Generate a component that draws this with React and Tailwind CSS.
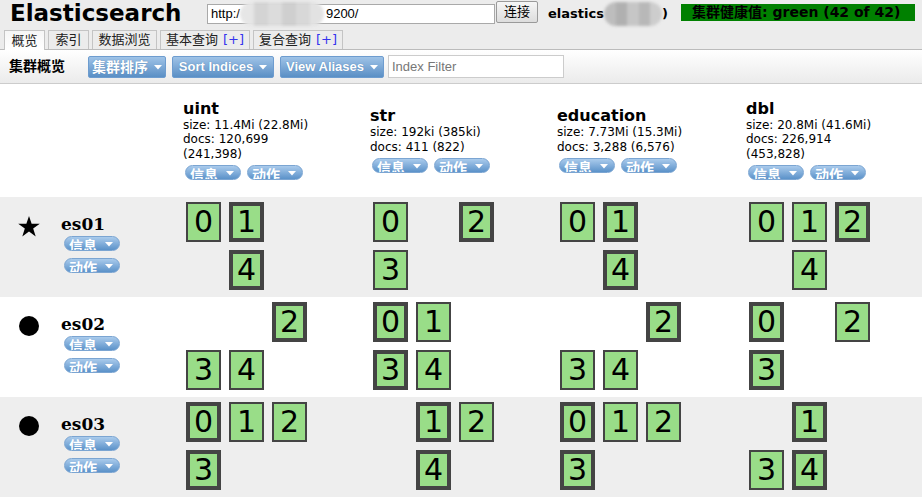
import React from 'react';

const SANS = "font-['DejaVu_Sans','Noto_Sans_CJK_SC',sans-serif]";
const CJK = "font-['DejaVu_Sans','Noto_Sans_CJK_SC',sans-serif]";

const indices = [
  { name: 'uint', size: '11.4Mi (22.8Mi)', docs: '120,699 (241,398)' },
  { name: 'str', size: '192ki (385ki)', docs: '411 (822)' },
  { name: 'education', size: '7.73Mi (15.3Mi)', docs: '3,288 (6,576)' },
  { name: 'dbl', size: '20.8Mi (41.6Mi)', docs: '226,914 (453,828)' },
];

// per node, per index: [shard number, is primary]
const nodes = [
  {
    name: 'es01',
    master: true,
    bg: 'bg-[#eeeeee]',
    shards: [
      [[0, false], [1, true], [4, true]],
      [[0, false], [2, true], [3, false]],
      [[0, false], [1, true], [4, true]],
      [[0, false], [1, false], [2, true], [4, false]],
    ],
  },
  {
    name: 'es02',
    master: false,
    bg: 'bg-white',
    shards: [
      [[2, true], [3, false], [4, false]],
      [[0, true], [1, false], [3, true], [4, false]],
      [[2, true], [3, false], [4, false]],
      [[0, true], [2, false], [3, true]],
    ],
  },
  {
    name: 'es03',
    master: false,
    bg: 'bg-[#eeeeee]',
    shards: [
      [[0, true], [1, false], [2, false], [3, true]],
      [[1, true], [2, false], [4, true]],
      [[0, true], [1, false], [2, false], [3, true]],
      [[1, true], [3, false], [4, true]],
    ],
  },
];

const colStart = ['col-start-1', 'col-start-2', 'col-start-3'];
const rowStart = ['row-start-1', 'row-start-2'];

const tabs = [
  { label: '概览', w: 'w-[41px]', active: true },
  { label: '索引', w: 'w-[41px]' },
  { label: '数据浏览', w: 'w-[65px]' },
  { label: '基本查询', w: 'w-[90px]', plus: true },
  { label: '复合查询', w: 'w-[90px]', plus: true },
];

function Caret({ className = '' }) {
  return (
    <svg width="8" height="5" viewBox="0 0 8 5" className={className}>
      <path d="M0 0 H8 L4 4.5 Z" fill="#fff" />
    </svg>
  );
}

function Pill({ label }) {
  return (
    <div className="flex h-[15px] w-[56px] items-start overflow-hidden rounded-full border border-[#7ba5d2] bg-linear-to-b from-[#aacbec] to-[#5b92c9] pl-[4px]">
      <span className={`${CJK} mt-[1px] text-[14px] font-bold leading-[16px] text-white`}>{label}</span>
      <Caret className="ml-auto mr-[6px] mt-[5px]" />
    </div>
  );
}

function ToolButton({ label, w, size = 'text-[13px]' }) {
  return (
    <div className={`flex h-[22px] ${w} items-center justify-center gap-[6px] rounded-[2px] border border-[#6d9ccf] bg-linear-to-b from-[#9fc3e7] to-[#5a8fc5] text-white`}>
      <span className={`font-['Liberation_Sans','Noto_Sans_CJK_SC',sans-serif] ${size} font-bold leading-[22px] [text-shadow:0_0_1px_#4a78a8]`}>{label}</span>
      <Caret className="mt-[1px]" />
    </div>
  );
}

function Mosaic({ w, shades }) {
  return (
    <span className={`inline-flex h-[24px] ${w} overflow-hidden rounded-[12px] blur-[1.5px]`}>
      {shades.map((c, i) => (
        <span key={i} className="h-full flex-1" style={{ background: c }} />
      ))}
    </span>
  );
}

function Shard({ n, primary }) {
  const pos = `${colStart[n % 3]} ${rowStart[n < 3 ? 0 : 1]}`;
  return (
    <div
      className={`${pos} box-border flex h-[40px] w-[35px] items-center justify-center bg-[#99dd88] border-[#444444] ${
        primary ? 'border-[4px]' : 'border-[2px]'
      } font-['DejaVu_Sans',sans-serif] text-[30px] leading-none text-black`}
    >
      {n}
    </div>
  );
}

function Star() {
  return (
    <svg width="22" height="21" viewBox="0 0 20 19">
      <polygon points="10,0 12.4,6.9 19.8,6.9 13.8,11.3 16.1,18.6 10,14.1 3.9,18.6 6.2,11.3 0.2,6.9 7.6,6.9" fill="#000" />
    </svg>
  );
}

export default function App() {
  return (
    <div className={`h-[500px] w-[922px] overflow-hidden bg-white ${SANS} text-black`}>
      {/* top bar */}
      <div className="h-[49px] bg-[#ececec]">
        <div className="flex h-[30px] items-start">
          <div className="w-[207px] pl-[10px] text-[23px] font-bold leading-[27px]">Elasticsearch</div>
          <div className="mt-[4px] flex h-[20px] w-[288px] items-center border border-[#a9a9a9] bg-white pl-[3px] font-['Liberation_Sans',sans-serif] text-[13px]">
            <span>http:/</span>
            <Mosaic w="w-[84px]" shades={['#e6e6e6', '#d4d4d4', '#dcdcdc', '#cfcfcf', '#d8d8d8', '#e2e2e2']} />
            <span className="ml-[2px]">9200/</span>
          </div>
          <div className={`ml-[1px] mt-[1px] flex h-[22px] w-[42px] items-center justify-center rounded-[2px] border border-[#9a9a9a] bg-linear-to-b from-[#f6f6f6] to-[#dddddd] ${CJK} text-[13px]`}>
            连接
          </div>
          <div className="ml-[10px] mt-[2px] flex items-center text-[13px] font-bold leading-[20px]">
            <span>elastics</span>
            <Mosaic w="w-[58px]" shades={['#bdbdbd', '#b0b0b0', '#c6c6c6', '#b8b8b8', '#cdcdcd']} />
            <span>)</span>
          </div>
          <div className="ml-auto mr-[7px] mt-[4px] flex h-[17px] w-[234px] items-center bg-[#008000] pl-[11px] text-[14px] font-bold leading-[17px]">
            集群健康值: green (42 of 42)
          </div>
        </div>
        <div className="flex h-[19px] items-end gap-[3px] pl-[4px]">
          {tabs.map((t) => (
            <div
              key={t.label}
              className={`${t.w} relative flex h-[19px] items-center justify-center border border-b-0 border-[#c4c4c4] ${CJK} text-[13px] leading-[18px] text-[#222] ${
                t.active ? 'z-10 -mb-px h-[20px] bg-linear-to-b from-[#f6f6f6] to-white' : 'bg-[#ececec]'
              }`}
            >
              <span>{t.label}</span>
              {t.plus && <span className="ml-[5px] text-[#3333ee]">[+]</span>}
            </div>
          ))}
        </div>
      </div>

      {/* toolbar */}
      <div className="flex h-[35px] items-center border-y border-t-[#bbbbbb] border-b-[#cccccc] bg-linear-to-b from-white to-[#ebebeb] pl-[9px]">
        <span className={`${CJK} w-[79px] text-[14px] font-bold`}>集群概览</span>
        <div className="flex items-center gap-[6px]">
          <ToolButton label="集群排序" w="w-[78px]" size="text-[14px]" />
          <ToolButton label="Sort Indices" w="w-[102px]" />
          <ToolButton label="View Aliases" w="w-[104px]" />
        </div>
        <input
          readOnly
          placeholder="Index Filter"
          className="ml-[4px] h-[23px] w-[176px] border border-[#cccccc] bg-white px-[3px] font-['Liberation_Sans',sans-serif] text-[13px] outline-none placeholder:text-[#777777]"
        />
      </div>

      {/* index headers, vertically centred like table cells */}
      <div className="grid h-[113px] grid-cols-[183px_187px_187px_189px_176px] items-center pb-[2px]">
        <div />
        {indices.map((ix) => (
          <div key={ix.name} className="w-[140px]">
            <div className="text-[16px] font-bold leading-[19px]">{ix.name}</div>
            <div className="text-[12px] leading-[14.5px]">size: {ix.size}</div>
            <div className="text-[12px] leading-[14.5px]">docs: {ix.docs}</div>
            <div className="ml-[2px] mt-[4px] flex gap-[6px]">
              <Pill label="信息" />
              <Pill label="动作" />
            </div>
          </div>
        ))}
      </div>

      {/* node rows */}
      {nodes.map((node) => (
        <div key={node.name} className={`grid h-[100px] grid-cols-[183px_187px_187px_189px_176px] ${node.bg}`}>
          <div className="flex pl-[18px] pt-[17px]">
            <div className="mt-[2px] flex h-[20px] w-[22px] items-center justify-center">
              {node.master ? <Star /> : <div className="h-[20px] w-[20px] rounded-full bg-black" />}
            </div>
            <div className="ml-[21px]">
              <div className="font-['DejaVu_Serif',serif] text-[17px] font-bold leading-[20px]">{node.name}</div>
              <div className="ml-[3px] mt-[2px] flex flex-col gap-[7px]">
                <Pill label="信息" />
                <Pill label="动作" />
              </div>
            </div>
          </div>
          {node.shards.map((list, i) => (
            <div key={i} className="pl-[3px] pt-[5px]">
              <div className="grid grid-cols-[35px_35px_35px] grid-rows-[40px_40px] gap-[8px]">
                {list.map(([n, p]) => (
                  <Shard key={n} n={n} primary={p} />
                ))}
              </div>
            </div>
          ))}
        </div>
      ))}
    </div>
  );
}
